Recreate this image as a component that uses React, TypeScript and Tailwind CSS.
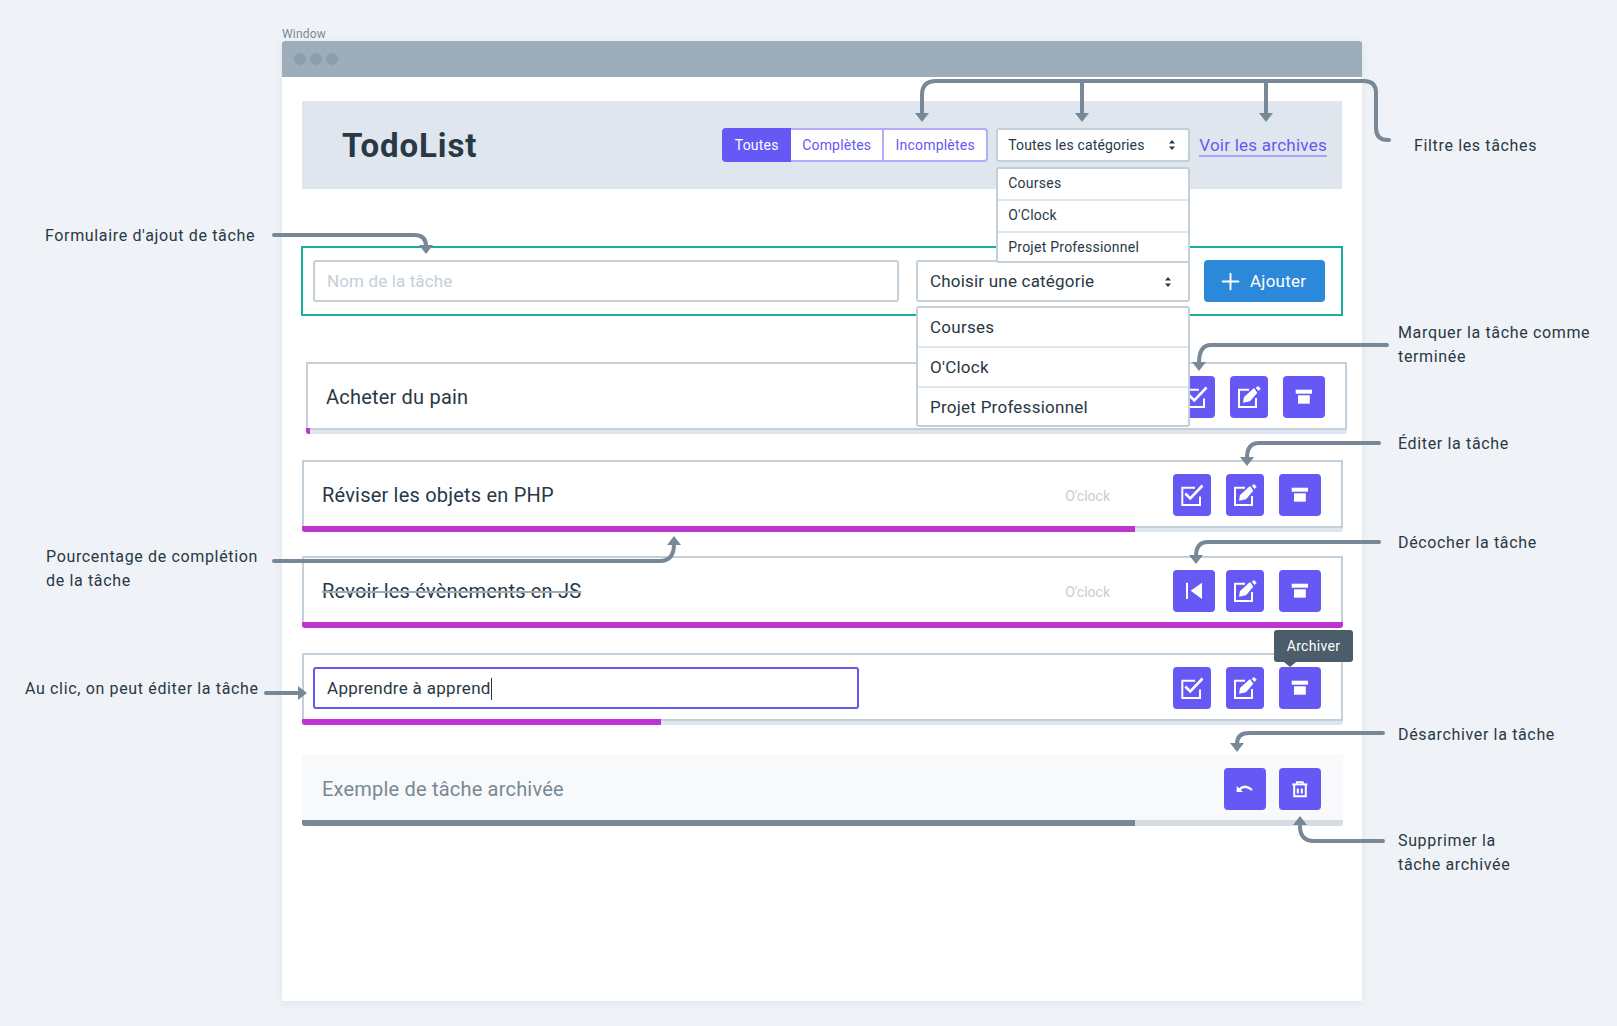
import { Plus } from "lucide-react";

const ink = "#293845";

function CheckIcon() {
  return (
    <svg width="24" height="24" viewBox="0 0 24 24" fill="none" stroke="white" className="overflow-visible">
      <path d="M15 4.7H2.3V22H20V13.5" strokeWidth="2" />
      <path d="M5.3 10.5L10.3 15.5L22.5 2.5" strokeWidth="2.6" />
    </svg>
  );
}

function EditIcon() {
  return (
    <svg width="24" height="24" viewBox="0 0 24 24" fill="white" className="overflow-visible">
      <path d="M12 4.7H2V22H19V13" fill="none" stroke="white" strokeWidth="2" />
      <path d="M6 17.7L7 12L17 3L20.3 7.7L13 16.3Z" />
      <path d="M18.7 3L21 1L23.7 3.7L21.7 6Z" />
    </svg>
  );
}

function ArchiveIcon() {
  return (
    <svg width="24" height="24" viewBox="0 0 24 24" fill="white">
      <rect x="3.7" y="4.7" width="16.3" height="4" />
      <rect x="6" y="10.3" width="11.8" height="8.4" />
    </svg>
  );
}

function PrevIcon() {
  return (
    <svg width="24" height="24" viewBox="0 0 24 24" fill="white">
      <rect x="4" y="3.7" width="2" height="16.3" />
      <path d="M8.7 11.8L20 3.7V20Z" />
    </svg>
  );
}

function UndoIcon() {
  return (
    <svg width="24" height="24" viewBox="0 0 24 24" fill="white">
      <path d="M3.7 9V15H10Z" />
      <path d="M5.5 13Q12 6.5 19 13" fill="none" stroke="white" strokeWidth="2.2" />
    </svg>
  );
}

function TrashIcon() {
  return (
    <svg width="24" height="24" viewBox="0 0 24 24" fill="none" stroke="white" strokeWidth="2">
      <path d="M4.3 7.4H19.3" />
      <path d="M8.8 7V5.2H14.8V7" strokeWidth="1.8" />
      <path d="M6.2 7.4V19.3H17.8V7.4" />
      <path d="M9.8 11.5V16.5M13.8 11.5V16.5" />
    </svg>
  );
}

function SortArrows() {
  return (
    <svg width="8" height="12" viewBox="0 0 8 12" fill={ink}>
      <path d="M4 1L7 4.6H1Z" />
      <path d="M4 11L7 7.4H1Z" />
    </svg>
  );
}

function ActionButton({ wide, children }: { wide?: boolean; children: React.ReactNode }) {
  return (
    <button
      className={
        wide
          ? "flex h-[42px] w-[42px] items-center justify-center rounded bg-[#6558F5]"
          : "flex h-[42px] w-[38px] items-center justify-center rounded bg-[#6558F5]"
      }
    >
      {children}
    </button>
  );
}

function Actions({ done, tooltip }: { done?: boolean; tooltip?: boolean }) {
  return (
    <div className="flex shrink-0">
      <div className="w-[53px]">
        {done ? (
          <ActionButton wide>
            <PrevIcon />
          </ActionButton>
        ) : (
          <ActionButton>
            <CheckIcon />
          </ActionButton>
        )}
      </div>
      <div className="w-[53px]">
        <ActionButton>
          <EditIcon />
        </ActionButton>
      </div>
      <div className="relative">
        <ActionButton wide>
          <ArchiveIcon />
        </ActionButton>
        {tooltip && (
          <div className="absolute left-[-5px] top-[-37px] flex h-8 w-[79px] items-center justify-center rounded-[3px] bg-[#4B5C6B] text-[14px] tracking-[0.3px] text-white">
            Archiver
            <span className="absolute left-[10px] top-8 h-0 w-0 border-x-[6px] border-t-[5px] border-x-transparent border-t-[#4B5C6B]" />
          </div>
        )}
      </div>
    </div>
  );
}

function Task({
  name,
  category,
  done,
  progress,
  tooltip,
  className,
  children,
}: {
  name?: string;
  category?: string;
  done?: boolean;
  progress: number;
  tooltip?: boolean;
  className?: string;
  children?: React.ReactNode;
}) {
  return (
    <div className={className}>
      <div className="flex h-[66px] items-start border-2 border-b-0 border-[#C3CFD9] pl-[9px] pr-5 pt-3">
        {children ?? (
          <>
            <div
              className={
                done
                  ? "flex-1 pl-[9px] text-[20px] leading-[42px] tracking-[0.2px] text-[#293845] line-through decoration-[#9EADBA] decoration-2"
                  : "flex-1 pl-[9px] text-[20px] leading-[42px] tracking-[0.2px] text-[#293845]"
              }
            >
              {name}
            </div>
            <div className="mr-[63px] text-[14px] leading-[45px] text-[#C3CFD9]">{category}</div>
          </>
        )}
        <Actions done={done} tooltip={tooltip} />
      </div>
      <div className="h-1.5 overflow-hidden rounded-b-[3px] bg-[linear-gradient(#C3CFD9_2px,#DFE6ED_2px)]">
        <div className="h-full bg-[#BD34D1]" style={{ width: `${progress}%` }} />
      </div>
    </div>
  );
}

function Menu({ items, className, rowClass }: { items: string[]; className: string; rowClass: string }) {
  return (
    <ul className={className}>
      {items.map((item) => (
        <li key={item} className={rowClass}>
          {item}
        </li>
      ))}
    </ul>
  );
}

const categories = ["Courses", "O'Clock", "Projet Professionnel"];

function Header() {
  return (
    <header className="flex h-[88px] items-center bg-[#DFE6ED] pl-10 pr-[15px]">
      <h1 className="flex-1 pt-px text-[33px] font-bold tracking-[0.9px] text-[#293845]">TodoList</h1>
      <div className="flex h-[34px] text-[14px] tracking-[0.2px]">
        <button className="w-[69px] rounded-l bg-[#6558F5] text-white">Toutes</button>
        <button className="w-[93px] border-y-2 border-r-2 border-[#B2ACFA] bg-white text-[#6558F5]">Complètes</button>
        <button className="w-[104px] rounded-r border-y-2 border-r-2 border-[#B2ACFA] bg-white text-[#6558F5]">Incomplètes</button>
      </div>
      <div className="relative ml-2 w-[194px]">
        <div className="flex h-[34px] items-center justify-between rounded-[3px] border-2 border-[#C3CFD9] bg-white pl-2.5 pr-3 text-[14px] tracking-[0.15px] text-[#293845]">
          Toutes les catégories
          <SortArrows />
        </div>
        <Menu
          items={categories}
          className="absolute left-0 top-[39px] z-20 w-full rounded-[3px] border-2 border-[#C3CFD9] bg-white"
          rowClass="h-8 border-b-2 border-[#DFE6ED] pl-2.5 text-[14px] leading-7 tracking-[0.25px] text-[#293845] last:h-7 last:border-b-0"
        />
      </div>
      <a className="ml-[9px] mt-0.5 border-b-2 border-[#A9A3F9] text-[17px] leading-[20px] tracking-[0.25px] text-[#6558F5]">Voir les archives</a>
    </header>
  );
}

function AddForm() {
  return (
    <form className="mx-[-1px] mt-[57px] flex h-[70px] items-center border-2 border-[#1AAE9F] pl-[10px] pr-4">
      <input
        readOnly
        placeholder="Nom de la tâche"
        className="h-[42px] w-[586px] rounded-[3px] border-2 border-[#C3CFD9] bg-white px-3 text-[17px] tracking-[0.13px] outline-none placeholder:text-[#C3CFD9]"
      />
      <div className="relative ml-[17px] w-[274px]">
        <div className="flex h-[42px] items-center justify-between rounded-[3px] border-2 border-[#C3CFD9] bg-white pl-3 pr-4 pt-px text-[17px] tracking-[0.2px] text-[#293845]">
          Choisir une catégorie
          <SortArrows />
        </div>
        <Menu
          items={categories}
          className="absolute left-0 top-[46px] z-10 w-full rounded-[3px] border-2 border-[#C3CFD9] bg-white"
          rowClass="h-10 border-b-2 border-[#DFE6ED] pl-3 text-[17px] leading-[38px] tracking-[0.25px] text-[#293845] last:h-[37px] last:border-b-0"
        />
      </div>
      <button className="ml-[14px] flex h-[42px] w-[121px] items-center gap-1.5 rounded bg-[#2C88D9] pl-[13px] pt-px text-[17px] tracking-[0.25px] text-white">
        <Plus size={27} strokeWidth={1.7} />
        Ajouter
      </button>
    </form>
  );
}

function ArchivedTask() {
  return (
    <div className="mr-[-1px] mt-[30px]">
      <div className="flex h-[65px] items-start bg-[#F7F9FA] pl-5 pr-[22px] pt-[13px]">
        <div className="flex-1 text-[20px] leading-[42px] tracking-[0.2px] text-[#788896]">Exemple de tâche archivée</div>
        <div className="flex gap-[13px]">
          <ActionButton wide>
            <UndoIcon />
          </ActionButton>
          <ActionButton wide>
            <TrashIcon />
          </ActionButton>
        </div>
      </div>
      <div className="h-1.5 overflow-hidden rounded-b-[3px] bg-[#D5DBE1]">
        <div className="h-full w-[80%] bg-[#788896]" />
      </div>
    </div>
  );
}

function head(x: number, y: number, dir: "down" | "up" | "right") {
  if (dir === "down") return `${x - 7},${y - 9} ${x + 7},${y - 9} ${x},${y}`;
  if (dir === "up") return `${x - 7},${y + 9} ${x + 7},${y + 9} ${x},${y}`;
  return `${x - 9},${y - 7} ${x - 9},${y + 7} ${x},${y}`;
}

// les flèches d'annotation, posées par-dessus la maquette
function Arrows() {
  const heads = [
    head(922, 122, "down"),
    head(1082, 122, "down"),
    head(1266, 122, "down"),
    head(426, 254, "down"),
    head(1199, 371, "down"),
    head(1247, 466, "down"),
    head(1196, 564, "down"),
    head(1237, 752, "down"),
    head(674, 536, "up"),
    head(1300, 816, "up"),
    head(307, 693, "right"),
  ];
  return (
    <svg width="1617" height="1026" className="pointer-events-none absolute left-0 top-0 z-30" fill="none" stroke="#788896" strokeWidth="4" strokeLinecap="round">
      <path d="M1389 140H1388Q1376 140 1376 128V93Q1376 81 1364 81H936Q922 81 922 95V114" />
      <path d="M1082 81V114M1266 81V114" />
      <path d="M274 235H414Q426 235 426 246" />
      <path d="M1387 345H1211Q1199 345 1199 363" />
      <path d="M1379 443H1259Q1247 443 1247 458" />
      <path d="M1379 542H1208Q1196 542 1196 556" />
      <path d="M1383 733H1249Q1237 733 1237 744" />
      <path d="M1383 841H1314Q1300 841 1300 826" />
      <path d="M274 561H660Q674 561 674 544" />
      <path d="M266 693H299" />
      {heads.map((p) => (
        <polygon key={p} points={p} fill="#788896" stroke="none" />
      ))}
    </svg>
  );
}

function Notes() {
  const note = "absolute z-30 text-[16px] leading-6 tracking-[0.65px] text-[#293845]";
  return (
    <>
      <p className={`${note} left-[1414px] top-[134px]`}>Filtre les tâches</p>
      <p className={`${note} left-[45px] top-[224px]`}>Formulaire d'ajout de tâche</p>
      <p className={`${note} left-[1398px] top-[321px]`}>
        Marquer la tâche comme
        <br />
        terminée
      </p>
      <p className={`${note} left-[1398px] top-[432px]`}>Éditer la tâche</p>
      <p className={`${note} left-[1398px] top-[531px]`}>Décocher la tâche</p>
      <p className={`${note} left-[46px] top-[545px]`}>
        Pourcentage de complétion
        <br />
        de la tâche
      </p>
      <p className={`${note} left-[25px] top-[677px]`}>Au clic, on peut éditer la tâche</p>
      <p className={`${note} left-[1398px] top-[723px]`}>Désarchiver la tâche</p>
      <p className={`${note} left-[1398px] top-[829px]`}>
        Supprimer la
        <br />
        tâche archivée
      </p>
    </>
  );
}

export default function App() {
  return (
    <div className="relative h-[1026px] w-[1617px] overflow-hidden bg-[#EFF3F7] pl-[282px] pt-[26px] font-[Roboto,sans-serif]">
      <div className="h-[15px] pt-px text-[12px] leading-[15px] tracking-[0.2px] text-[#788896]">Window</div>
      <div className="w-[1080px] rounded-t-[3px] bg-white shadow-[0_2px_8px_rgba(41,56,69,0.08)]">
        <div className="flex h-9 items-center gap-1 rounded-t-[3px] bg-[#9EADBA] px-3">
          <span className="h-3 w-3 rounded-full bg-[#8C9DAC]" />
          <span className="h-3 w-3 rounded-full bg-[#8C9DAC]" />
          <span className="h-3 w-3 rounded-full bg-[#8C9DAC]" />
        </div>
        <main className="h-[924px] px-5 pt-6">
          <Header />
          <AddForm />
          <Task name="Acheter du pain" progress={0.4} className="ml-1 mr-[-5px] mt-[46px]" />
          <Task name="Réviser les objets en PHP" category="O'clock" progress={80} className="mr-[-1px] mt-[26px]" />
          <Task name="Revoir les évènements en JS" category="O'clock" done progress={100} className="mr-[-1px] mt-6" />
          <Task progress={34.5} tooltip className="mr-[-1px] mt-[25px]">
            <div className="flex-1">
              <div className="flex h-[42px] w-[546px] items-center rounded-[3px] border-2 border-[#6558F5] bg-white pl-3 pt-px text-[17px] tracking-[0.3px] text-[#293845]">
                Apprendre à apprend
                <span className="h-[22px] w-px bg-[#293845]" />
              </div>
            </div>
          </Task>
          <ArchivedTask />
        </main>
      </div>
      <Arrows />
      <Notes />
    </div>
  );
}
